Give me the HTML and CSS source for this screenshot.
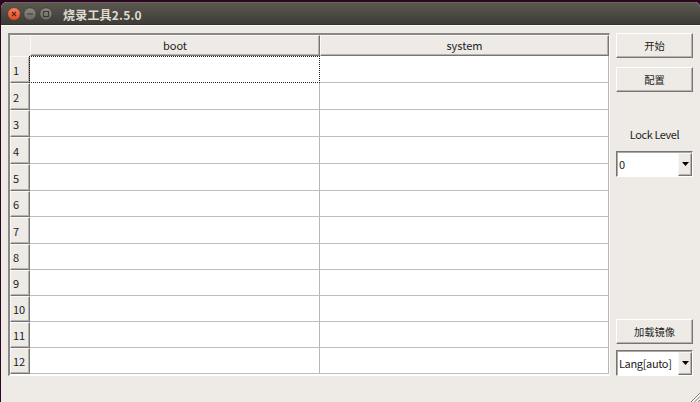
FILE: index.html
```html
<!DOCTYPE html>
<html lang="zh">
<head>
<meta charset="utf-8">
<title>烧录工具2.5.0</title>
<link rel="stylesheet" href="styles.css">
</head>
<body>
<div class="window">
  <header class="titlebar">
    <svg class="controls" width="52" height="18" viewBox="0 0 52 18">
      <defs>
        <linearGradient id="red" x1="0" y1="0" x2="0" y2="1"><stop offset="0" stop-color="#f58462"/><stop offset="1" stop-color="#df4a1d"/></linearGradient>
        <linearGradient id="gray" x1="0" y1="0" x2="0" y2="1"><stop offset="0" stop-color="#8d8a81"/><stop offset="1" stop-color="#68665e"/></linearGradient>
      </defs>
      <circle cx="9" cy="9" r="6.4" fill="url(#red)" stroke="#45352c" stroke-width=".7"/>
      <path d="M7 7l4 4m0-4l-4 4" stroke="#5c2415" stroke-width="1.1"/>
      <circle cx="25" cy="9" r="6.2" fill="url(#gray)" stroke="#383630" stroke-width=".7"/>
      <path d="M22 9h6" stroke="#3b3933"/>
      <circle cx="41" cy="9" r="6.2" fill="url(#gray)" stroke="#383630" stroke-width=".7"/>
      <rect x="38.5" y="6.5" width="5" height="5" fill="none" stroke="#3b3933"/>
    </svg>
    <h1>烧录工具2.5.0</h1>
  </header>
  <main>
    <div class="table">
      <div class="head corner"></div><div class="head">boot</div><div class="head">system</div>
      <div class="num">1</div><div class="cell focus"></div><div class="cell"></div>
      <div class="num">2</div><div class="cell"></div><div class="cell"></div>
      <div class="num">3</div><div class="cell"></div><div class="cell"></div>
      <div class="num">4</div><div class="cell"></div><div class="cell"></div>
      <div class="num">5</div><div class="cell"></div><div class="cell"></div>
      <div class="num">6</div><div class="cell"></div><div class="cell"></div>
      <div class="num">7</div><div class="cell"></div><div class="cell"></div>
      <div class="num">8</div><div class="cell"></div><div class="cell"></div>
      <div class="num">9</div><div class="cell"></div><div class="cell"></div>
      <div class="num">10</div><div class="cell"></div><div class="cell"></div>
      <div class="num">11</div><div class="cell"></div><div class="cell"></div>
      <div class="num">12</div><div class="cell"></div><div class="cell"></div>
    </div>
    <aside>
      <div class="button">开始</div>
      <div class="button config">配置</div>
      <div class="label">Lock Level</div>
      <div class="select"><span>0</span><i><svg width="7" height="4" viewBox="0 0 7 4"><path d="M0 0h7L3.5 4z"/></svg></i></div>
      <div class="button load">加载镜像</div>
      <div class="select lang"><span>Lang[auto]</span><i><svg width="7" height="4" viewBox="0 0 7 4"><path d="M0 0h7L3.5 4z"/></svg></i></div>
    </aside>
  </main>
  <svg class="grip" width="10" height="10" viewBox="0 0 10 10"><path d="M1 10l9-9M4.5 10L10 4.5M8 10l2-2" stroke="#85827e"/><path d="M2.5 10L10 2.5M6 10l4-4" stroke="#fff" stroke-width=".8"/></svg>
</div>
</body>
</html>
```
FILE: styles.css
```css
* { box-sizing: border-box; }
body {
  margin: 0;
  width: 700px;
  height: 402px;
  overflow: hidden;
  padding: 2px 0 0 1px;
  background: #2d0622;
  font: 11px/16px "Noto Sans CJK SC", sans-serif;
  color: #1c1c1c;
}
.window {
  position: relative;
  height: 400px;
  background: #eeebe7;
  border-radius: 6px 5px 0 0;
  overflow: hidden;
}
.titlebar {
  display: flex;
  align-items: center;
  height: 23px;
  padding-left: 4px;
  background: linear-gradient(#5b584f, #3d3c37);
  border-top: 1px solid #69665d;
  border-bottom: 1px solid #35342f;
}
.controls { display: block; margin-top: 1px; }
h1 {
  margin: 2px 0 0 6px;
  font-size: 12px;
  letter-spacing: .2px;
  line-height: 18px;
  font-weight: 700;
  color: #dfdbd2;
}
main {
  display: flex;
  gap: 5px;
  padding: 7px 0 0 7px;
  border-top: 1px solid #faf9f7;
}
.table {
  display: grid;
  grid-template-columns: 20px 290px 289px;
  grid-template-rows: 21px 27px 27px 27px 27px 27px 26px 27px 26px 26px 26px 26px 26px;
  width: 602px;
  height: 343px;
  border: 2px solid #8a8886;
  border-right: 1px solid #fbfaf9;
  border-bottom: 1px solid #fff;
  background: #fff;
}
.head, .num {
  background: #eeebe7;
  border: 1px solid #fbfaf9;
  border-right-color: #777573;
  border-bottom-color: #777573;
  box-shadow: inset -1px -1px #b5b2af;
}
.head {
  text-align: center;
  line-height: 19px;
}
.corner { border-color: #eeebe7; border-top-color: #fbfaf9; box-shadow: none; }
.num {
  display: flex;
  align-items: center;
  padding: 0 0 0 2px;
  letter-spacing: -.2px;
}
.cell {
  border-right: 1px solid #b8b7b6;
  border-bottom: 1px solid #bfbebd;
}
.focus {
  border: 1px dotted #222;
  margin-left: -1px;
}
aside {
  display: flex;
  flex-direction: column;
  width: 79px;
}
.button {
  width: 77px;
  height: 25px;
  margin-left: 1px;
  border: 1px solid #fff;
  border-right-color: #777573;
  border-bottom-color: #777573;
  box-shadow: inset -1px -1px #b5b2af;
  text-align: center;
  font-size: 10.3px;
  line-height: 24px;
}
.config { margin-top: 9px; }
.label {
  margin: 34px 0 0 0;
  text-align: center;
  letter-spacing: -.4px;
}
.select {
  display: flex;
  width: 77px;
  height: 26px;
  margin-top: 9px;
  margin-left: 1px;
  border: 1px solid #777573;
  border-right-color: #fff;
  border-bottom-color: #fff;
  box-shadow: inset 1px 1px #aaa8a5;
  background: #fff;
}
.select span {
  flex: 1;
  padding-left: 2px;
  letter-spacing: -.35px;
  line-height: 24px;
}
.select i {
  display: flex;
  align-items: center;
  justify-content: center;
  width: 14px;
  margin-top: 1px;
  padding-bottom: 1px;
  border: 1px solid #f8f7f5;
  border-right-color: #777573;
  border-bottom-color: #777573;
  box-shadow: inset -1px -1px #b5b2af;
  background: #eeebe7;
}
.load { margin-top: 142px; }
.lang { margin-top: 6px; }
.grip {
  position: absolute;
  right: 0;
  bottom: 0;
}
```
